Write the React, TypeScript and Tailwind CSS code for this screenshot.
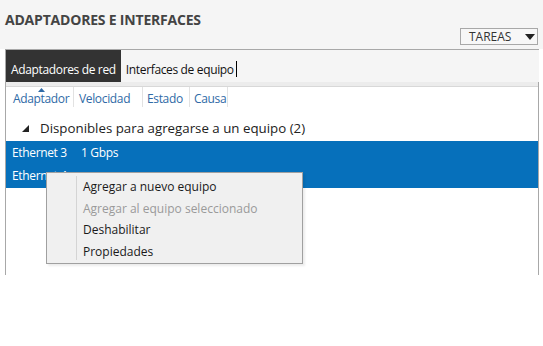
const columns = [
  { label: "Adaptador", w: "w-[68px] pl-[7px]", sorted: true },
  { label: "Velocidad", w: "w-[69px] pl-[5px]", sorted: false },
  { label: "Estado", w: "w-[47px] pl-[4px]", sorted: false },
  { label: "Causa", w: "w-[38px] pl-[4px]", sorted: false },
];

const menuItems = [
  { label: "Agregar a nuevo equipo", disabled: false },
  { label: "Agregar al equipo seleccionado", disabled: true },
  { label: "Deshabilitar", disabled: false },
  { label: "Propiedades", disabled: false },
];

function ContextMenu() {
  return (
    <div className="absolute left-[46px] top-[172px] w-[257px] h-[92px] bg-[#f0f0f0] border border-[#a0a0a0] shadow-[2px_2px_2px_rgba(0,0,0,0.08)] flex py-[3px]">
      <div className="w-[30px] border-r border-[#d4d4d4]" />
      <div className="flex flex-col pl-[6px]">
        {menuItems.map((item) => (
          <div
            key={item.label}
            className={`h-[21.5px] leading-[21.5px] text-[12px] ${item.disabled ? "text-[#9a9a9a]" : "text-[#1a1a1a]"}`}
          >
            {item.label}
          </div>
        ))}
      </div>
    </div>
  );
}

export default function App() {
  return (
    <div className="relative w-[543px] h-[346px] bg-white overflow-hidden" style={{ fontFamily: '"Open Sans", "Noto Sans", sans-serif' }}>
      <div className="bg-[#f5f5f5] h-[49px] flex items-start justify-between pr-[5px]">
        <h1 className="pl-[5px] pt-[9px] text-[14px] font-bold text-[#444] tracking-[-0.2px]">ADAPTADORES E INTERFACES</h1>
        <div className="mt-[28px] w-[78px] h-[17px] border border-[#a8a8a8] bg-[#f7f7f7] flex items-center justify-between pl-[8px] pr-[2px]">
          <span className="text-[12px] text-[#333] leading-none">TAREAS</span>
          <svg width="10" height="6" viewBox="0 0 10 6"><path d="M0 0h10L5 6z" fill="#222" /></svg>
        </div>
      </div>

      <div className="ml-[5px] w-[534px] border-t border-[#a8a8a8]">
        <div className="flex items-stretch h-[32px] bg-[#f5f5f5] border-l border-[#a8a8a8]">
          <div className="bg-[#333] text-white text-[12px] tracking-[-0.35px] pl-[5px] pr-[5px] flex items-end pb-[3px]">Adaptadores de red</div>
          <div className="text-[#111] text-[12px] tracking-[-0.35px] pl-[5px] flex items-end pb-[3px]">
            Interfaces de equipo
            <span className="ml-[2px] mb-[2px] w-px h-[16px] bg-black" />
          </div>
        </div>
        <div className="h-[193px] border-l border-r border-[#a8a8a8]">
          <div className="h-[5px] bg-[#ececec] border-b border-[#d8d8d8]" />
          <div className="flex h-[20px]">
            {columns.map((c) => (
              <div key={c.label} className={`relative ${c.w} shrink-0 border-r border-[#e2e2e2] text-[12px] tracking-[-0.35px] text-[#2f6aa6] leading-[24px]`}>
                {c.label}
                {c.sorted && (
                  <svg className="absolute left-[32px] top-[1px]" width="7" height="4" viewBox="0 0 7 4"><path d="M0 4L3.5 0 7 4z" fill="#2f6aa6" /></svg>
                )}
              </div>
            ))}
          </div>
          <div className="flex items-center h-[23px] mt-[10px] pl-[16px] text-[13.3px] text-[#222]">
            <svg width="7" height="7" viewBox="0 0 7 7" className="mr-[11px]"><path d="M7 0V7H0z" fill="#222" /></svg>
            Disponibles para agregarse a un equipo (2)
          </div>
          <div className="mt-[1px] bg-[#0670bb] text-white text-[12px] tracking-[-0.35px]">
            <div className="flex h-[23px] items-center pl-[6px]">
              <span className="w-[69px]">Ethernet 3</span>
              <span>1 Gbps</span>
            </div>
            <div className="flex h-[24px] items-center pl-[6px]">
              <span>Ethernet 4</span>
            </div>
          </div>
        </div>
      </div>

      <ContextMenu />
    </div>
  );
}
